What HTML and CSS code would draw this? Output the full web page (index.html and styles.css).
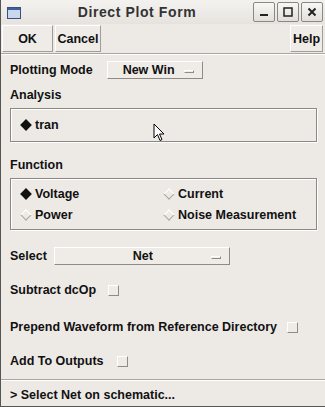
FILE: index.html
```html
<!DOCTYPE html>
<html>
<head>
<meta charset="utf-8">
<link rel="stylesheet" href="styles.css">
</head>
<body>
<div class="win">
  <div class="titlebar">
    <svg class="wicon" width="14" height="12" viewBox="0 0 14 12"><rect x="0.5" y="0.5" width="13" height="11" fill="#c9d8ef" stroke="#3b4f7a"/><rect x="1" y="1" width="12" height="2" fill="#3b5fa0"/></svg>
    <div class="title">Direct Plot Form</div>
    <div class="wbtns">
      <div class="wbtn"><svg width="10" height="10" viewBox="0 0 10 10"><rect x="1" y="7" width="8" height="2" fill="#222"/></svg></div>
      <div class="wbtn"><svg width="10" height="10" viewBox="0 0 10 10"><rect x="1" y="1" width="8" height="8" fill="none" stroke="#222" stroke-width="1.5"/></svg></div>
      <div class="wbtn"><svg width="10" height="10" viewBox="0 0 10 10"><path d="M1.5 1.5 L8.5 8.5 M8.5 1.5 L1.5 8.5" stroke="#222" stroke-width="2"/></svg></div>
    </div>
  </div>
  <div class="toolbar">
    <div class="btn ok">OK</div>
    <div class="btn cancel">Cancel</div>
    <div class="spacer"></div>
    <div class="btn help">Help</div>
  </div>
  <div class="body">
    <div class="row mode">
      <span class="lbl">Plotting Mode</span>
      <div class="combo combo-mode"><span>New Win</span><i class="ind"></i></div>
    </div>
    <div class="section-lbl">Analysis</div>
    <div class="box box-an">
      <div class="radio"><i class="dia on"></i>tran</div>
    </div>
    <div class="section-lbl fn">Function</div>
    <div class="box box-fn">
      <div class="radio"><i class="dia on"></i>Voltage</div>
      <div class="radio"><i class="dia"></i>Current</div>
      <div class="radio"><i class="dia"></i>Power</div>
      <div class="radio"><i class="dia"></i>Noise Measurement</div>
    </div>
    <div class="row sel">
      <span class="lbl">Select</span>
      <div class="combo combo-sel"><span>Net</span><i class="ind"></i></div>
    </div>
    <div class="row chk r1"><span class="lbl">Subtract dcOp</span><i class="cb"></i></div>
    <div class="row chk r2"><span class="lbl">Prepend Waveform from Reference Directory</span><i class="cb"></i></div>
    <div class="row chk r3"><span class="lbl">Add To Outputs</span><i class="cb"></i></div>
  </div>
  <div class="status">&gt; Select Net on schematic...</div>
  <svg class="cursor" width="14" height="20" viewBox="0 0 14 20"><path d="M1 1 L1 15 L4.5 11.5 L7 17.5 L9 16.5 L6.5 11 L11 11 Z" fill="#fff" stroke="#000" stroke-width="1"/></svg>
</div>
</body>
</html>
```
FILE: styles.css
```css
html, body { margin: 0; padding: 0; }
body {
  width: 325px; height: 407px; overflow: hidden;
  background: #edeae6;
  font-family: "Liberation Sans", Arial, sans-serif;
  font-weight: bold; font-size: 12.5px; color: #111;
}
.win { position: relative; width: 325px; height: 407px; box-sizing: border-box; border-left: 1px solid #555; border-bottom: 1px solid #555; }
.titlebar {
  height: 24px; display: flex; align-items: center;
  background: linear-gradient(#f4f2ef, #e6e3df);
}
.wicon { margin-left: 6px; margin-top: 1px; }
.title { flex: 1; text-align: center; font-size: 14px; color: #333; letter-spacing: 0.6px; }
.wbtns { display: flex; gap: 2px; margin-right: 2px; }
.wbtn {
  width: 22px; height: 20px; box-sizing: border-box;
  border: 1px solid #8a8884; border-radius: 2px;
  background: linear-gradient(#f8f7f5, #e2dfdb);
  display: flex; align-items: center; justify-content: center;
}
.toolbar { display: flex; height: 28px; padding: 1px 2px 0 1px; border-bottom: 1px solid #a9a6a2; box-shadow: 0 1px 0 #fff; margin-bottom: 1px; }
.btn {
  height: 27px; box-sizing: border-box; display: flex; align-items: center; justify-content: center;
  border: 1px solid #fff; border-right-color: #a09d99; border-bottom-color: #a09d99;
  background: #efece8;
}
.ok { width: 51px; }
.cancel { width: 46px; margin-left: 2px; }
.help { width: 33px; }
.spacer { flex: 1; }
.body { padding: 0 9px 0 9px; }
.row { display: flex; align-items: center; }
.mode { height: 20px; margin-top: 6px; }
.lbl { white-space: nowrap; }
.combo {
  height: 18px; box-sizing: border-box; display: flex; align-items: center; position: relative;
  border: 1px solid #fff; border-right-color: #8e8b87; border-bottom-color: #8e8b87;
  background: #efece8;
}
.combo span { flex: 1; text-align: center; }
.ind { display: block; width: 10px; height: 3px; box-sizing: border-box; border: 1px solid #fff; border-right-color: #8e8b87; border-bottom-color: #8e8b87; margin: 2px 8px 0 0; }
.combo-mode { width: 96px; margin-left: 14px; }
.combo-mode span { padding-left: 6px; }
.combo-sel { width: 176px; margin-left: 7px; }
.combo-sel span { padding-left: 20px; }
.section-lbl { margin-top: 8px; height: 14px; }
.section-lbl.fn { margin-top: 16px; }
.box {
  margin-top: 6px; box-sizing: border-box; width: 307px;
  border: 1px solid #8c8985; box-shadow: inset 1px 1px 0 #fff, 1px 1px 0 #fff;
}
.box-an { height: 34px; display: flex; align-items: center; padding-left: 8px; }
.box-fn { height: 52px; display: grid; grid-template-columns: 143px 1fr; grid-template-rows: 21px 21px; align-content: center; padding-left: 8px; }
.radio { display: flex; align-items: center; }
.dia { display: block; width: 8px; height: 8px; transform: rotate(45deg); margin: 0 5px 0 3px; box-sizing: border-box; border: 1px solid #fff; border-right-color: #aaa7a3; border-bottom-color: #aaa7a3; }
.dia.on { background: #111; border-color: #111; }
.sel { margin-top: 17px; height: 18px; }
.chk .cb { display: block; width: 11px; height: 11px; box-sizing: border-box; border: 1px solid #fff; border-right-color: #8e8b87; border-bottom-color: #8e8b87; background: #efece8; }
.r1 { margin-top: 17px; height: 16px; }
.r1 .cb { margin-left: 12px; }
.r2 { margin-top: 21px; height: 16px; }
.r2 .cb { margin-left: 10px; }
.r3 { margin-top: 18px; height: 16px; }
.r3 .cb { margin-left: 13px; }
.status { margin-top: 10px; border-top: 1px solid #a9a6a2; box-shadow: inset 0 1px 0 #fff; height: 29px; display: flex; align-items: center; padding-left: 9px; }
.cursor { position: absolute; left: 152px; top: 123px; }
```
